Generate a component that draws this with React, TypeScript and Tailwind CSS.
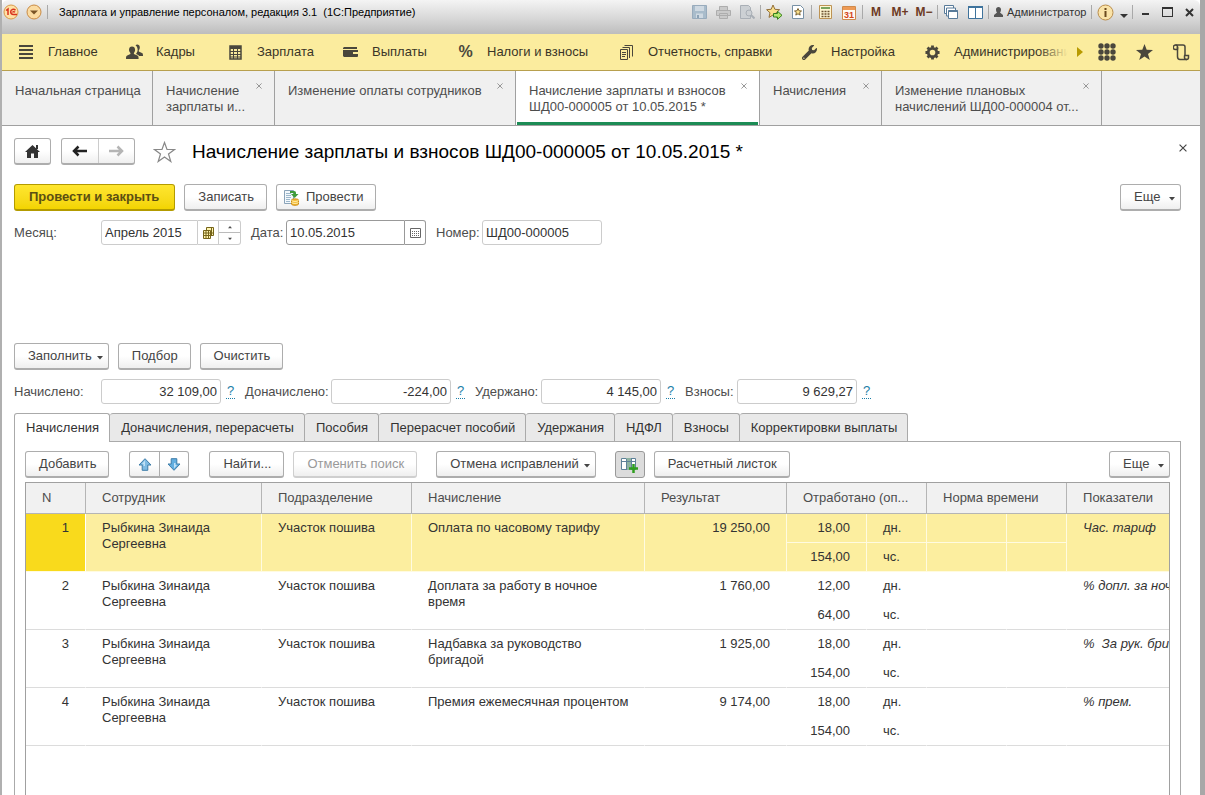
import React, { useState } from 'react'
import { FaStar, FaWrench } from 'react-icons/fa'

const rows = [
  { n: 1, accrual: 'Оплата по часовому тарифу', sum: '19 250,00', days: '18,00', hours: '154,00', metric: 'Час. тариф' },
  { n: 2, accrual: 'Доплата за работу в ночное время', sum: '1 760,00', days: '12,00', hours: '64,00', metric: '% допл. за ночные' },
  { n: 3, accrual: 'Надбавка за руководство бригадой', sum: '1 925,00', days: '18,00', hours: '154,00', metric: '%  За рук. бригадой' },
  { n: 4, accrual: 'Премия ежемесячная процентом', sum: '9 174,00', days: '18,00', hours: '154,00', metric: '% прем.' },
]

const menu = [
  { label: 'Главное', icon: <ListIcon />, width: 'w-[108px]' },
  { label: 'Кадры', icon: <PeopleIcon />, width: 'w-[101px]' },
  { label: 'Зарплата', icon: <CalcIcon />, width: 'w-[115px]' },
  { label: 'Выплаты', icon: <WalletIcon />, width: 'w-[115px]' },
  { label: 'Налоги и взносы', icon: <b className="text-base leading-4">%</b>, width: 'w-[161px]' },
  { label: 'Отчетность, справки', icon: <DocsIcon />, width: 'w-[183px]' },
  { label: 'Настройка', icon: <FaWrench size={15} />, width: 'w-[123px]' },
  { label: 'Администрирование', icon: <GearIcon />, width: 'w-[160px]' },
]

const windows = [
  { lines: ['Начальная страница'], width: 'w-[151px]', fixed: true },
  { lines: ['Начисление', 'зарплаты и...'], width: 'w-[122px]' },
  { lines: ['Изменение оплаты сотрудников'], width: 'w-[241px]' },
  { lines: ['Начисление зарплаты и взносов', 'ШД00-000005 от 10.05.2015 *'], width: 'w-[244px]', active: true },
  { lines: ['Начисления'], width: 'w-[122px]' },
  { lines: ['Изменение плановых', 'начислений ШД00-000004 от...'], width: 'w-[220px]' },
]

const totals = [
  { id: 'accrued', label: 'Начислено:', value: '32 109,00', width: 'w-[87px]' },
  { id: 'extra', label: 'Доначислено:', value: '-224,00', width: 'w-[86px]' },
  { id: 'withheld', label: 'Удержано:', value: '4 145,00', width: 'w-[66px]' },
  { id: 'fees', label: 'Взносы:', value: '9 629,27', width: 'w-[52px]' },
]

const sections = [
  'Начисления',
  'Доначисления, перерасчеты',
  'Пособия',
  'Перерасчет пособий',
  'Удержания',
  'НДФЛ',
  'Взносы',
  'Корректировки выплаты',
]

function ListIcon() {
  return (
    <svg width="15" height="15" viewBox="0 0 15 15" fill="currentColor">
      <path d="M0 0h14v2H0zM0 4h14v2H0zM0 8h14v2H0zM0 12h14v2H0z" />
    </svg>
  )
}

function PeopleIcon() {
  return (
    <svg width="17" height="16" viewBox="0 0 17 16" fill="currentColor">
      <path d="M9.500 1.200c1.500-1.400 4.300-.7 4.300 2 0 1.400-.4 2.300-1 3v1.300l3.200 1.400c.8.400 1 1 1 3.100h-3.800c-.4-1-1.600-1.500-3.200-2.100l1-1.700c.9-1.300 1.300-4.600-1.500-7z" />
      <path d="M6 2.500c1.900 0 3.100 1.200 3.100 3.300 0 1.300-.5 2.400-1.200 3.100v1.200l3.500 1.500c1 .5 1.200 1.200 1.200 3.400H0c0-2.200.2-2.900 1.200-3.400L4.400 10V8.900C3.600 8.200 3 7.100 3 5.800c0-2.100 1.200-3.300 3-3.300z" />
    </svg>
  )
}

function CalcIcon() {
  return (
    <svg width="13" height="15" viewBox="0 0 13 15">
      <path d="M1 1h11v13H1z" fill="none" stroke="currentColor" strokeWidth="1.500" />
      <path d="M1 6.500h11M1 9.500h11M4.500 4v10M8.500 4v10M1 12h11" stroke="currentColor" />
      <path d="M1 1h11v3H1z" fill="currentColor" />
    </svg>
  )
}

function WalletIcon() {
  return (
    <svg width="15" height="12" viewBox="0 0 15 12" fill="currentColor">
      <path d="M1 1h13v2H0V2zM0 4h15v2h-5v2h5v2.500L14 11H1l-1-1z" />
    </svg>
  )
}

function DocsIcon() {
  return (
    <svg width="13" height="15" viewBox="0 0 13 15" fill="none" stroke="currentColor">
      <path d="M.5 4.500h7v10h-7zM2.500 2.500h7V13M4.500.5h8v11M2 7.500h4M2 9.500h4M2 11.500h3" />
    </svg>
  )
}

function GearIcon() {
  return (
    <svg width="15" height="15" viewBox="-8 -8 16 16" fill="none" stroke="currentColor">
      <circle r="4.500" strokeWidth="3" />
      <path d="M0-7.500V-5M0 5v2.500M-7.500 0H-5M5 0h2.500M-5.300-5.300l1.800 1.800M3.500 3.500l1.800 1.800M-5.300 5.300l1.800-1.800M3.500-3.500l1.800-1.800" strokeWidth="3" />
    </svg>
  )
}

function Caret({ className = '' }: { className?: string }) {
  return (
    <svg width="6" height="4" viewBox="0 0 6 4" fill="currentColor" className={className}>
      <path d="M0 0h6L3 3.500z" />
    </svg>
  )
}

function CloseMark({ size = 7 }: { size?: number }) {
  return (
    <svg width={size} height={size} viewBox="0 0 7 7" stroke="currentColor">
      <path d="M.5.5l6 6M6.500.5l-6 6" />
    </svg>
  )
}

function Arrow({ down = false }: { down?: boolean }) {
  return (
    <svg width="14" height="13" viewBox="0 0 14 13" className={down ? 'rotate-180' : ''}>
      <path d="M7 .7L13 7h-3.200v5.300H4.200V7H1z" fill={down ? '#62aee0' : '#7fbbe3'} stroke="#3d7ca8" strokeLinejoin="round" />
      <path d="M7 2.500L4 6h1.500v2H7z" fill="#c3e2f5" />
    </svg>
  )
}

function Nav({ back = false }: { back?: boolean }) {
  return (
    <svg width="15" height="12" viewBox="0 0 15 12" fill="none" stroke="currentColor" strokeWidth="2.500" className={back ? '' : 'rotate-180'}>
      <path d="M2 6h13M6.500 1.500L2 6l4.500 4.500" />
    </svg>
  )
}

interface ButtonProps {
  children: React.ReactNode
  className?: string
  menu?: boolean
  disabled?: boolean
  label?: string
}

function Button({ children, className = 'pl-[13px] pr-3', menu = false, disabled = false, label }: ButtonProps) {
  return (
    <button
      type="button"
      disabled={disabled}
      aria-label={label}
      aria-haspopup={menu ? 'menu' : undefined}
      className={`flex h-[27px] shrink-0 items-center whitespace-nowrap rounded-[3px] border border-b-2 bg-linear-to-b from-white from-50% to-[#efefef] ${
        disabled ? 'border-[#cfcfcf] text-[#999]' : 'border-[#adadad] text-[#444]'
      } ${menu ? 'min-w-[61px] justify-between pl-[13px] pr-[5px]' : `justify-center ${className}`}`}
    >
      {children}
      {menu && <Caret className="ml-[5px] mt-[3px]" />}
    </button>
  )
}

function Slot({ children, label, width = 'w-6' }: { children: React.ReactNode; label: string; width?: string }) {
  return (
    <button type="button" aria-label={label} className={`flex h-6 shrink-0 items-center justify-center ${width}`}>
      {children}
    </button>
  )
}

function Sep() {
  return <span className="mx-px h-[14px] w-px shrink-0 bg-[#a9a9a9]" />
}

function TitleBar() {
  return (
    <header className="flex h-[34px] items-start rounded-t-md bg-linear-to-b from-[#f4f4f4] via-[#dadada] via-50% to-[#bdbdbd] text-xs text-black">
      <div className="flex h-6 min-w-0 flex-1 items-center">
        <svg width="44" height="18" viewBox="0 0 44 18" className="shrink-0">
          <circle cx="9" cy="9" r="7" fill="#ffe1a6" stroke="#d99a4a" />
          <path d="M4 7.500l2-1.500v6M13.500 7.200c-1.800-1.800-4.800-.8-4.800 1.600 0 1.800 1.200 2.700 2.800 2.700H15M13 9.200c-.8-.8-2.300-.7-2.300.3" fill="none" stroke="#d8331f" strokeWidth="1.500" />
          <circle cx="32" cy="9" r="7" fill="#fbdca2" stroke="#c98b45" />
          <path d="M28 7.500h8l-4 4z" fill="#7a5426" />
        </svg>
        <Sep />
        <span className="ml-[10px] truncate text-[11px]">Зарплата и управление персоналом, редакция 3.1&nbsp; (1С:Предприятие)</span>
      </div>
      <div className="flex h-6 items-center">
        <Slot label="Сохранить">
          <svg width="15" height="14" viewBox="0 0 15 14">
            <path d="M.5.5h14v13H.5z" fill="#a9bccb" stroke="#98abbc" />
            <path d="M3 1h9v5H3zM4 8.500h7V13H4z" fill="#cfd9e2" />
            <path d="M5 10h2v3H5z" fill="#8ca2b5" />
          </svg>
        </Slot>
        <Slot label="Печать">
          <svg width="15" height="13" viewBox="0 0 15 13" fill="#cacaca" stroke="#adadad">
            <path d="M3.500.5h8v4h-8zM.5 4.500h14v5H.5zM3.500 7.500h8v5h-8z" />
            <path d="M5 9.500h5" />
          </svg>
        </Slot>
        <Slot label="Предварительный просмотр">
          <svg width="15" height="14" viewBox="0 0 15 14" fill="#ccd0d4" stroke="#a9afb6">
            <path d="M.5.5h8l2 2v11H.5z" />
            <circle cx="9" cy="8" r="3" />
            <path d="M11 10l3.500 3.500" strokeWidth="2" />
          </svg>
        </Slot>
        <Sep />
        <Slot label="Добавить в избранное">
          <svg width="17" height="16" viewBox="0 0 17 16" strokeLinejoin="round">
            <path d="M7 1l1.900 4.300 4.700.4-3.500 3.100 1 4.600L7 11l-4 2.400 1-4.600L.6 5.700l4.600-.4z" fill="#fbe08b" stroke="#93703a" />
            <path d="M7.500 9.500h4V7.300l4.500 4-4.500 4V13h-4z" fill="#b6e86c" stroke="#35801c" />
          </svg>
        </Slot>
        <Slot label="Избранное">
          <svg width="12" height="14" viewBox="0 0 12 14" strokeLinejoin="round">
            <path d="M.5.500h8l3 3v10H.5z" fill="#fff" stroke="#7790a5" />
            <path d="M6 3.500l1.100 2.300 2.400.2-1.900 1.600.6 2.500L6 8.800l-2.200 1.300.6-2.500L2.500 6l2.400-.2z" fill="#fbe08b" stroke="#79612e" />
          </svg>
        </Slot>
        <Sep />
        <Slot label="Калькулятор">
          <svg width="13" height="14" viewBox="0 0 13 14">
            <path d="M.5.5h12v13H.5z" fill="#fff6d2" stroke="#bd9354" />
            <path d="M2 2h9v2H2z" fill="#7aa45e" />
            <path d="M2.500 6.500h8M2.500 9h8M2.500 11.500h8" stroke="#6b5130" strokeDasharray="2 1" strokeWidth="1.500" />
          </svg>
        </Slot>
        <Slot label="Календарь">
          <svg width="14" height="15" viewBox="0 0 14 15">
            <path d="M.5 1.500h13v13H.5z" fill="#fffaf0" stroke="#cf8a4c" />
            <path d="M1 2h12v3H1z" fill="#ee9a55" />
            <text x="7" y="13" textAnchor="middle" fill="#d3451b" className="text-[9px] font-bold">31</text>
          </svg>
        </Slot>
        <Sep />
        <Slot label="M"><b className="text-[#6d3a24]">M</b></Slot>
        <Slot label="M плюс"><b className="text-[#6d3a24]">M+</b></Slot>
        <Slot label="M минус"><b className="text-[#6d3a24]">M−</b></Slot>
        <Sep />
        <Slot label="Окна">
          <svg width="14" height="14" viewBox="0 0 14 14" fill="#fff" stroke="#587a99">
            <path d="M.5.5h9v8h-9z" />
            <path d="M2.500 3h9v8h-9z" />
            <path d="M4.500 5.500h9v8h-9z" />
            <path d="M4.500 6h9" strokeWidth="2" />
          </svg>
        </Slot>
        <Slot label="Разделить окно">
          <svg width="15" height="13" viewBox="0 0 15 13" fill="#fff" stroke="#3f739c">
            <path d="M.5.5h14v12H.5zM7.500 1v11" />
            <path d="M0 1h15" strokeWidth="2" />
          </svg>
        </Slot>
        <Sep />
        <button type="button" className="flex w-[100px] items-center gap-1 pl-1 text-[#333]">
          <svg width="9" height="10" viewBox="0 0 9 10" fill="#555" className="shrink-0">
            <path d="M4.500 0C6 0 7 1 7 2.500S6.500 5 6 5.500L9 8v2H0V8l3-2.500C2.500 5 2 4 2 2.500S3 0 4.500 0z" />
          </svg>
          <span className="text-[11px]">Администратор</span>
        </button>
        <Sep />
        <Slot label="Справка">
          <svg width="17" height="17" viewBox="0 0 17 17">
            <circle cx="8.500" cy="8.500" r="7.500" fill="#fae3a8" stroke="#b98d4c" />
            <path d="M7.500 4h2v2h-2zM7.500 7h2v6h-2z" fill="#6b4a1e" />
          </svg>
        </Slot>
        <Slot label="Еще" width="w-[14px]">
          <svg width="8" height="4" viewBox="0 0 8 4" fill="#333" className="mt-2"><path d="M0 0h8L4 4z" /></svg>
        </Slot>
        <Sep />
        <Slot label="Свернуть" width="w-[22px]">
          <span className="mt-1 h-[2px] w-[7px] bg-[#333]" />
        </Slot>
        <Slot label="Развернуть" width="w-[22px]">
          <span className="h-[10px] w-[11px] border border-t-2 border-[#333]" />
        </Slot>
        <Slot label="Закрыть" width="w-[22px]">
          <svg width="9" height="9" viewBox="0 0 9 9" stroke="#333" strokeWidth="2"><path d="M1 1l7 7M8 1L1 8" /></svg>
        </Slot>
      </div>
    </header>
  )
}

function MainMenu() {
  return (
    <nav className="flex h-[37px] items-center border-b border-[#b8a04e] bg-[#fbec9e] text-[#4a473c]">
      <div className="relative flex h-full min-w-0 flex-1 items-center overflow-hidden pl-[14px]">
        {menu.map((m) => (
          <button key={m.label} type="button" className={`flex shrink-0 items-center whitespace-nowrap ${m.width}`}>
            <span className="flex w-[21px] shrink-0 justify-center">{m.icon}</span>
            <span className="ml-[11px] text-[#3a3527]">{m.label}</span>
          </button>
        ))}
        <span className="absolute inset-y-0 right-0 w-[30px] bg-linear-to-r from-transparent to-[#fbec9e]" />
      </div>
      <div className="flex shrink-0 items-center pl-[9px] pr-[10px]">
        <button type="button" aria-label="Далее" className="mr-[15px]">
          <svg width="6" height="10" viewBox="0 0 6 10" fill="#b89a00"><path d="M0 0l6 5-6 5z" /></svg>
        </button>
        <button type="button" aria-label="Функции" className="mr-5">
          <svg width="18" height="18" viewBox="0 0 18 18" fill="currentColor">
            {[3, 9, 15].map((y) => [3, 9, 15].map((x) => <circle key={`${x}-${y}`} cx={x} cy={y} r="2.700" />))}
          </svg>
        </button>
        <button type="button" aria-label="Избранное" className="mr-5">
          <svg width="17" height="16" viewBox="0 0 17 16" fill="currentColor">
            <path d="M8.500 0l2.200 5.800 6.300.2-5 3.900 1.800 6.100-5.300-3.600L3.200 16 5 9.900 0 6l6.300-.2z" />
          </svg>
        </button>
        <button type="button" aria-label="История">
          <svg width="17" height="17" viewBox="0 0 17 17" fill="none" stroke="currentColor" strokeWidth="1.500">
            <path d="M4 5.500H2.500a2 2 0 010-4.500H10c1.500 0 2 1 2 2v8.500M4.500 3v9.500c0 2 1 3 2.500 3h7" />
            <path d="M2.500 1C4 1 4.500 2 4.500 3v2.500M11 11.500h4.500v2c0 1.300-.7 2-2 2s-2-.7-2-2v-2" />
          </svg>
        </button>
      </div>
    </nav>
  )
}

function WindowTabs() {
  return (
    <div className="flex h-[55px] border-b border-[#a0a0a0] bg-[#f0f0f0] leading-4 text-[#4d4d4d]">
      {windows.map((w, i) => (
        <div key={i} className={`flex shrink-0 flex-col border-r border-[#a0a0a0] ${w.width} ${w.active ? 'bg-white' : ''}`}>
          <div className="flex flex-1 justify-between pl-[13px] pr-3 pt-3">
            <button type="button" className="self-start whitespace-nowrap text-left">
              {w.lines.map((line) => (
                <span key={line} className="block">{line}</span>
              ))}
            </button>
            {!w.fixed && (
              <button type="button" aria-label="Закрыть вкладку" className="-ml-4 self-start text-[#888]">
                <CloseMark size={6} />
              </button>
            )}
          </div>
          {w.active && <div className="mx-px h-[3px] bg-[#1c8c55]" />}
        </div>
      ))}
    </div>
  )
}

function AccrualTable() {
  const [selected, setSelected] = useState(1)
  const th = 'border-b border-r border-[#b5b5b5] px-4 pt-[7px] align-top font-normal whitespace-nowrap overflow-hidden text-ellipsis'

  return (
    <table className="w-full table-fixed border-separate border-spacing-0 text-left leading-4 text-[#333]">
      <colgroup>
        <col className="w-[60px]" />
        <col className="w-[176px]" />
        <col className="w-[150px]" />
        <col className="w-[233px]" />
        <col className="w-[142px]" />
        <col className="w-[80px]" />
        <col className="w-[60px]" />
        <col className="w-[80px]" />
        <col className="w-[60px]" />
        <col />
      </colgroup>
      <thead>
        <tr className="h-[31px] bg-[#f1f1f1] text-[#4d4d4d]">
          <th className={th}>N</th>
          <th className={th}>Сотрудник</th>
          <th className={th}>Подразделение</th>
          <th className={th}>Начисление</th>
          <th className={th}>Результат</th>
          <th className={th} colSpan={2}>Отработано (оп...</th>
          <th className={th} colSpan={2}>Норма времени</th>
          <th className="overflow-hidden border-b border-[#b5b5b5] pl-4 pt-[7px] align-top font-normal">Показатели</th>
        </tr>
      </thead>
      {rows.map((r) => {
        const on = r.n === selected
        const bg = on ? 'bg-[#fcee9f] border-[#fffbe0]' : 'border-white'
        const line = on ? 'border-b-[#fffbe0]' : 'border-b-[#dcdcdc]'
        const top = `border-r border-b pl-4 pr-4 pt-[6px] align-top ${bg}`
        const cell = `${top} ${line}`
        return (
          <tbody key={r.n} onClick={() => setSelected(r.n)}>
            <tr className="h-[29px]">
              <td rowSpan={2} className={`border-b border-r border-white px-4 pt-[6px] text-right align-top ${line} ${on ? 'bg-[#f9da1c]' : ''}`}>{r.n}</td>
              <td rowSpan={2} className={cell}>Рыбкина Зинаида Сергеевна</td>
              <td rowSpan={2} className={cell}>Участок пошива</td>
              <td rowSpan={2} className={`border-b border-r pl-4 pr-3 pt-[6px] align-top ${bg} ${line}`}>{r.accrual}</td>
              <td rowSpan={2} className={`${cell} text-right`}>{r.sum}</td>
              <td className={`${top} text-right`}>{r.days}</td>
              <td className={top}>дн.</td>
              <td className={top} />
              <td className={top} />
              <td rowSpan={2} className={`overflow-hidden whitespace-pre border-b pl-4 pt-[6px] align-top italic ${bg} ${line}`}>{r.metric}</td>
            </tr>
            <tr className="h-[29px]">
              <td className={`${cell} text-right`}>{r.hours}</td>
              <td className={cell}>чс.</td>
              <td className={cell} />
              <td className={cell} />
            </tr>
          </tbody>
        )
      })}
    </table>
  )
}

export default function App() {
  const [section, setSection] = useState(sections[0])
  const field = 'h-[25px] min-w-0 border border-[#ccc] bg-white px-[3px] text-[#333]'

  return (
    <div className="flex h-screen min-h-[600px] flex-col overflow-hidden border-l-2 border-r-[5px] border-l-[#b0b0b0] border-r-[#a8a8a8] bg-white font-['Liberation_Sans',Arial,sans-serif] text-[13px] text-[#4d4d4d]">
      <TitleBar />
      <MainMenu />
      <WindowTabs />

      <main className="flex min-h-0 flex-1 flex-col pl-3 pr-[19px] pt-3">
        <div className="flex items-center">
          <Button className="w-[37px]" label="Домой">
            <svg width="15" height="13" viewBox="0 0 15 13" fill="#333">
              <path d="M7.500 0L15 7h-2v6H9V8.500H6V13H2V7H0zM11 0h2v4h-2z" />
            </svg>
          </Button>
          <div className="ml-[10px] flex h-[27px] w-[74px] rounded-[3px] border border-b-2 border-[#adadad] bg-linear-to-b from-white from-50% to-[#efefef]">
            <button type="button" aria-label="Назад" className="flex flex-1 items-center justify-center border-r border-[#ccc] text-[#222]"><Nav back /></button>
            <button type="button" aria-label="Вперед" className="flex flex-1 items-center justify-center text-[#b5b5b5]"><Nav /></button>
          </div>
          <button type="button" aria-label="В избранное" className="ml-[18px]">
            <svg width="23" height="22" viewBox="0 0 23 22" fill="#fff" stroke="#888" strokeWidth="1.200">
              <path d="M11.500 1.500l2.500 7h7.500l-6 4.500 2.300 7.500-6.300-4.600-6.300 4.600L7.500 13l-6-4.500H9z" />
            </svg>
          </button>
          <h1 className="ml-4 flex-1 truncate text-[19px] leading-6 text-black">Начисление зарплаты и взносов ШД00-000005 от 10.05.2015 *</h1>
          <button type="button" aria-label="Закрыть" className="-mt-2 -mr-[6px] text-[#444]"><CloseMark size={8} /></button>
        </div>

        <div className="mt-[19px] flex gap-[9px]">
          <button type="button" className="h-[27px] whitespace-nowrap rounded-[3px] border border-b-2 border-[#b39b00] bg-linear-to-b from-[#ffe62e] to-[#f3d400] pl-[14px] pr-[15px] font-bold text-[#5c4f12]">
            Провести и закрыть
          </button>
          <Button>Записать</Button>
          <Button className="pl-[6px] pr-3">
            <svg width="17" height="17" viewBox="0 0 17 17" className="mr-[6px]">
              <path d="M1.500 1.500h9v13h-9z" fill="#f3f8fc" stroke="#8aa3b8" />
              <path d="M3 4.500h5M3 6.500h5M3 8.500h5M3 10.500h4M3 12.500h4" stroke="#9cb7cb" />
              <path d="M7 2h4c1.500 0 2 .8 2 2v1h2.500L11.700 9 8 5h2.500V4H7z" fill="#3f9c3a" />
              <path d="M8.500 11c0-1.500 7-1.500 7 0v4c0 1.700-7 1.700-7 0z" fill="#f4b92f" stroke="#cc8e16" />
              <path d="M8.500 11.500c1 1.200 6 1.200 7 0M8.500 13.500c1 1.200 6 1.200 7 0" fill="none" stroke="#fff0b5" />
            </svg>
            Провести
          </Button>
          <div className="flex-1" />
          <Button menu>Еще</Button>
        </div>

        <div className="mt-[9px] flex items-center">
          <label htmlFor="month" className="w-[87px]">Месяц:</label>
          <div className="flex w-[140px]">
            <input id="month" defaultValue="Апрель 2015" className={`${field} flex-1 rounded-l-[3px]`} />
            <button type="button" aria-label="Выбрать месяц" className="flex w-[21px] items-center justify-center border-y border-r border-[#ccc]">
              <svg width="11" height="12" viewBox="0 0 11 12" fill="#fff5b0" stroke="#77651a">
                <path d="M3.500.5h7v8h-7z" />
                <path d="M.5 3.500h7v8h-7zM3 3v8M5.500 3v8M1 6h9M1 8.500h9M8.500 1v7" />
              </svg>
            </button>
            <div className="flex w-[22px] flex-col rounded-r-[3px] border-y border-r border-[#ccc]">
              <button type="button" aria-label="Следующий месяц" className="flex flex-1 items-center justify-center border-b border-[#bbb]"><Caret className="w-1 rotate-180" /></button>
              <button type="button" aria-label="Предыдущий месяц" className="flex flex-1 items-center justify-center"><Caret className="w-1" /></button>
            </div>
          </div>
          <label htmlFor="date" className="ml-[10px] w-[35px]">Дата:</label>
          <div className="flex w-[140px]">
            <input id="date" defaultValue="10.05.2015" className="h-[25px] min-w-0 flex-1 rounded-l-[3px] border border-[#999] px-[3px] text-[#333]" />
            <button type="button" aria-label="Выбрать дату" className="flex w-[21px] items-center justify-center rounded-r-[3px] border-y border-r border-[#999]">
              <svg width="11" height="10" viewBox="0 0 11 10" fill="none" stroke="#666">
                <path d="M.5.500h10v9H.5z" />
                <path d="M2 3.500h7M2 5.500h7M2 7.500h7" strokeDasharray="1 1" />
              </svg>
            </button>
          </div>
          <label htmlFor="number" className="ml-[10px] w-[46px]">Номер:</label>
          <input id="number" defaultValue="ШД00-000005" className={`${field} w-[120px] rounded-[3px]`} />
        </div>

        <div className="mt-[98px] flex gap-[9px]">
          <Button menu>Заполнить</Button>
          <Button>Подбор</Button>
          <Button>Очистить</Button>
        </div>

        <div className="mt-[9px] flex items-center">
          {totals.map((t) => (
            <React.Fragment key={t.id}>
              <label htmlFor={t.id} className={t.width}>{t.label}</label>
              <input id={t.id} readOnly value={t.value} className={`${field} w-[120px] rounded-[3px] text-right`} />
              <span className="flex w-6 pl-[5px]">
                <a href="#help" className="border-b border-dotted border-[#1b7ea6] px-px leading-[14px] text-[#1b7ea6]">?</a>
              </span>
            </React.Fragment>
          ))}
        </div>

        <div role="tablist" className="mt-[9px] flex">
          {sections.map((s) => (
            <button
              key={s}
              type="button"
              role="tab"
              aria-selected={s === section}
              onClick={() => setSection(s)}
              className={`whitespace-nowrap rounded-t-[3px] border-r border-t border-[#aaa] pl-[11px] pr-[10px] text-[#333] first:border-l ${
                s === section ? 'relative -mb-px h-[29px] bg-white' : 'h-[28px] bg-[#e9e9e9]'
              }`}
            >
              {s}
            </button>
          ))}
        </div>

        <section className="flex min-h-0 flex-1 flex-col border border-b-0 border-[#aaa] px-[10px] pt-[9px]">
          <div className="flex">
            <Button>Добавить</Button>
            <div className="ml-5 flex h-[27px] w-[60px] rounded-[3px] border border-b-2 border-[#adadad] bg-linear-to-b from-white from-50% to-[#efefef]">
              <button type="button" aria-label="Вверх" className="flex flex-1 items-center justify-center border-r border-[#adadad]"><Arrow /></button>
              <button type="button" aria-label="Вниз" className="flex flex-1 items-center justify-center"><Arrow down /></button>
            </div>
            <div className="ml-5 flex gap-[9px]">
              <Button>Найти...</Button>
              <Button disabled>Отменить поиск</Button>
            </div>
            <div className="ml-[19px] flex gap-[19px]">
              <Button menu>Отмена исправлений</Button>
              <button type="button" aria-label="Показать колонки" className="flex h-[27px] w-[30px] items-center justify-center rounded-[3px] border border-[#999] bg-[#dcdcdc]">
                <svg width="17" height="16" viewBox="0 0 17 16">
                  <path d="M.5 1.500h14v11H.5z" fill="#fff" stroke="#5e8199" />
                  <path d="M5 1h5v12H5z" fill="#8fb3a2" />
                  <path d="M.5 4.500h14M5.500 2v11M10.500 2v11" stroke="#5e8199" />
                  <path d="M12.500 7v9M8 11.500h9" stroke="#2f9e1f" strokeWidth="2.500" />
                </svg>
              </button>
            </div>
            <div className="ml-[9px]"><Button>Расчетный листок</Button></div>
            <div className="flex-1" />
            <Button menu>Еще</Button>
          </div>
          <div className="mt-1 min-h-0 flex-1 overflow-hidden border border-b-0 border-[#a0a0a0]">
            <AccrualTable />
          </div>
        </section>
      </main>
    </div>
  )
}
